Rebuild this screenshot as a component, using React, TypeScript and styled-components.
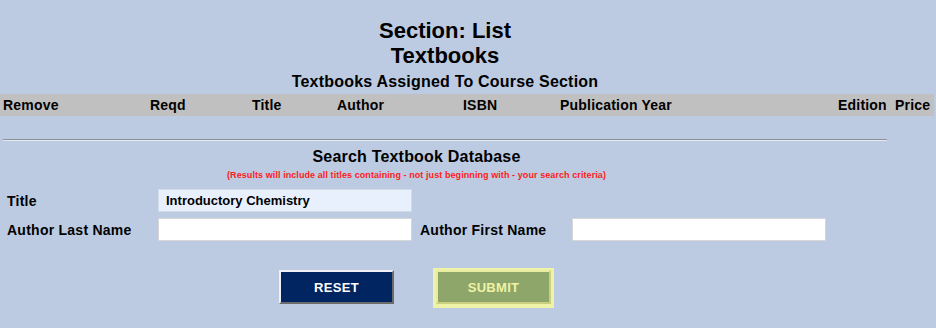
import * as React from 'react';
import styled, {createGlobalStyle} from 'styled-components';
import {useState} from 'react';

const GlobalStyle = createGlobalStyle`
  html, body {
    margin: 0;
    padding: 0;
    background: #bccbe2;
  }
  body {
    font-family: "Liberation Sans", Arial, sans-serif;
    color: #000;
  }
`;

const Page = styled.div`
  width: 936px;
  min-height: 328px;
  padding-top: 18px;
  box-sizing: border-box;
`;

const TitleBlock = styled.header`
  width: 890px;
  text-align: center;
`;

const PageTitle = styled.h1`
  margin: 0;
  font-size: 22px;
  line-height: 25px;
  font-weight: bold;
`;

const SubTitle = styled.h2`
  margin: 4px 0 0;
  font-size: 16px;
  line-height: 19px;
  font-weight: bold;
  letter-spacing: 0.2px;
`;

const HeaderRow = styled.div`
  margin-top: 3px;
  width: 934px;
  height: 22px;
  padding-left: 3px;
  box-sizing: border-box;
  background: #c0c0c0;
  display: grid;
  grid-template-columns: 147px 102px 85px 126px 97px 278px 57px auto;
  align-items: center;
  font-size: 14px;
  font-weight: bold;
  letter-spacing: 0.2px;
`;

const Rule = styled.hr`
  margin: 23px 0 0 3px;
  width: 884px;
  height: 0;
  border: 0;
  border-top: 1px solid #8a8f98;
  border-bottom: 1px solid #e4e9f1;
`;

const SearchPanel = styled.form`
  width: 833px;
  display: flex;
  flex-direction: column;
  align-items: center;
`;

const SearchHeading = styled.h3`
  margin: 6px 0 0;
  font-size: 16px;
  line-height: 19px;
  font-weight: bold;
  letter-spacing: 0.2px;
`;

const Note = styled.div`
  margin-top: 4px;
  font-size: 9px;
  line-height: 11px;
  font-weight: bold;
  letter-spacing: 0.08px;
  color: #ff1a1a;
`;

const FieldGrid = styled.div`
  margin-top: 8px;
  align-self: stretch;
  padding-left: 7px;
  display: grid;
  grid-template-columns: 151px 262px 152px 254px;
  grid-auto-rows: 23px;
  row-gap: 6px;
  align-items: center;
`;

const Label = styled.label`
  font-size: 14px;
  font-weight: bold;
  letter-spacing: 0.25px;
  white-space: nowrap;
`;

const TextInput = styled.input<{$filled?: boolean}>`
  width: 254px;
  height: 23px;
  box-sizing: border-box;
  border: 1px solid ${p => (p.$filled ? '#d3dbe6' : '#d6d6d6')};
  background: ${p => (p.$filled ? '#e8f0fe' : '#ffffff')};
  padding: 0 0 0 7px;
  font-family: "Liberation Sans", Arial, sans-serif;
  font-size: 13px;
  font-weight: bold;
  color: #000;
  outline: none;
`;

const Buttons = styled.div`
  margin-top: 29px;
  display: flex;
  gap: 42px;
  padding-right: 3px;
`;

const Button = styled.button<{$kind: 'reset' | 'submit'}>`
  width: 115px;
  height: 34px;
  box-sizing: border-box;
  border: 2px solid;
  border-color: ${p => (p.$kind === 'reset'
    ? '#eef0f6 #6c6c6c #6c6c6c #eef0f6'
    : '#e7ec9e #c9cf7e #c9cf7e #e7ec9e')};
  background: ${p => (p.$kind === 'reset' ? '#002561' : '#8fa66a')};
  color: ${p => (p.$kind === 'reset' ? '#ffffff' : '#eef3a4')};
  box-shadow: ${p => (p.$kind === 'submit' ? '0 0 0 2px #eef3a8, 0 1px 0 3px #eef3a8' : 'none')};
  font-family: "Liberation Sans", Arial, sans-serif;
  font-size: 13px;
  font-weight: bold;
  letter-spacing: 0.3px;
  cursor: pointer;
  padding: 0;
`;

const columns = ['Remove', 'Reqd', 'Title', 'Author', 'ISBN', 'Publication Year', 'Edition', 'Price'];

const App: React.FunctionComponent = () => {
  const [title, setTitle] = useState('Introductory Chemistry');
  const [lastName, setLastName] = useState('');
  const [firstName, setFirstName] = useState('');

  const onReset = () => {
    setTitle('');
    setLastName('');
    setFirstName('');
  };

  return (
    <Page>
      <GlobalStyle/>
      <TitleBlock>
        <PageTitle>Section: List<br/>Textbooks</PageTitle>
        <SubTitle>Textbooks Assigned To Course Section</SubTitle>
      </TitleBlock>
      <HeaderRow>
        {columns.map(c => <span key={c}>{c}</span>)}
      </HeaderRow>
      <Rule/>
      <SearchPanel onSubmit={e => e.preventDefault()}>
        <SearchHeading>Search Textbook Database</SearchHeading>
        <Note>(Results will include all titles containing - not just beginning with - your search criteria)</Note>
        <FieldGrid>
          <Label>Title</Label>
          <TextInput $filled value={title} onChange={e => setTitle(e.target.value)}/>
          <span/>
          <span/>
          <Label>Author Last Name</Label>
          <TextInput value={lastName} onChange={e => setLastName(e.target.value)}/>
          <Label>Author First Name</Label>
          <TextInput value={firstName} onChange={e => setFirstName(e.target.value)}/>
        </FieldGrid>
        <Buttons>
          <Button type="button" $kind="reset" onClick={onReset}>RESET</Button>
          <Button type="submit" $kind="submit">SUBMIT</Button>
        </Buttons>
      </SearchPanel>
    </Page>
  );
};

export default App;
